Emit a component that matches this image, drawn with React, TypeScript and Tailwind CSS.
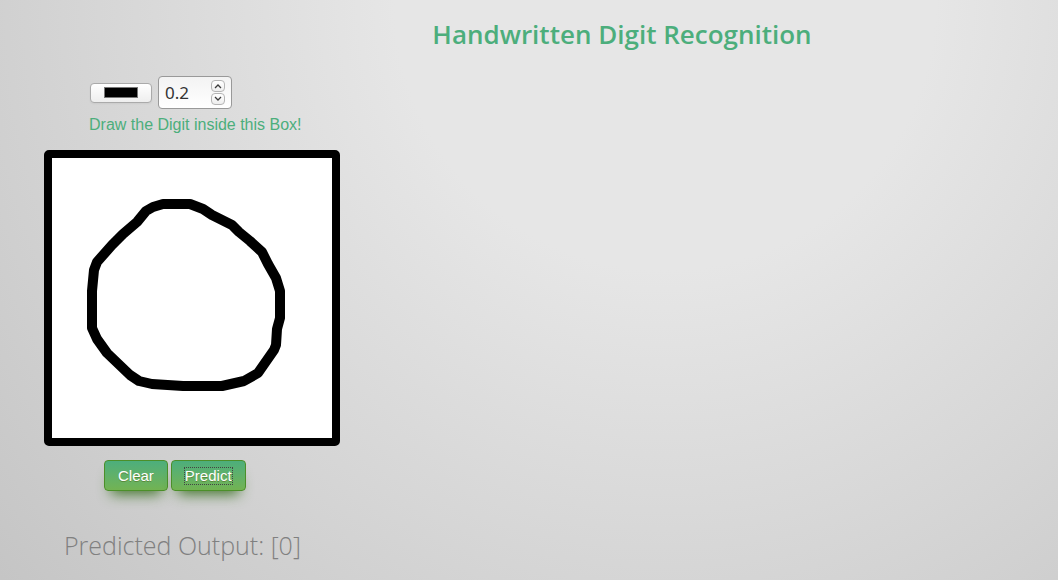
import { useState } from "react";

const stroke =
  "M111 46 L138 46 L151 51 L160 57 L180 67 L187 74 L198 83 L210 94 L216 106 L224 120 L228 133 L228 160 L225 171 L224 187 L222 192 L206 215 L192 223 L170 228 L131 228 L100 226 L87 223 L78 217 L55 195 L45 181 L40 170 L40 133 L42 112 L45 104 L60 87 L71 76 L85 64 L94 53 L101 49 Z";

function Chevron({ d }: { d: string }) {
  return (
    <svg viewBox="0 0 8 6" className="h-1.5 w-2" fill="none" stroke="#3c3c3c" strokeWidth="1.3">
      <path d={d} />
    </svg>
  );
}

const spin =
  "flex h-3 w-3.5 items-center justify-center rounded border border-[#b5b5b5] bg-linear-to-b from-white to-[#eee]";

const action =
  "h-[31px] rounded border border-[#4b8f29] bg-linear-to-b from-[#4cae7c] to-[#72b352] px-[13px] text-[15px] leading-4 text-white shadow-[0_10px_14px_-7px_#3e7327] text-shadow-[0_1px_0_#5b8a3c]";

export default function App() {
  const [color, setColor] = useState("#000000");
  const [size, setSize] = useState(0.2);
  const [path, setPath] = useState(stroke);
  const [result, setResult] = useState("[0]");
  const step = (by: number) => setSize(Math.round((size + by) * 10) / 10);

  return (
    <main className="min-h-screen bg-[radial-gradient(circle_at_665px_0,#e6e6e6_270px,#c5c5c5_880px)] pt-4 font-['Liberation_Sans',Arial,sans-serif]">
      <h1 className="pl-[186px] text-center font-['Open_Sans',sans-serif] text-[26px] leading-9 font-semibold text-[#4cae7c]">
        Handwritten Digit Recognition
      </h1>
      <section className="flex flex-col items-start pt-6 pl-11">
        <div className="flex items-center gap-1.5 pl-[46px]">
          <label className="flex h-5 w-[62px] items-center justify-center rounded border border-[#aaa] bg-linear-to-b from-white to-[#eee] shadow-xs">
            <input
              type="color"
              aria-label="Pen colour"
              value={color}
              onChange={(e) => setColor(e.target.value)}
              className="h-[11px] w-[34px] appearance-none border border-[#777] bg-black p-0 [&::-webkit-color-swatch]:border-0 [&::-webkit-color-swatch-wrapper]:p-0"
            />
          </label>
          <div className="flex h-[33px] w-[74px] items-center justify-between rounded border border-[#999] bg-linear-to-b from-[#f3f3f3] to-white px-1.5">
            <input
              type="number"
              aria-label="Pen size"
              step="0.1"
              value={size}
              onChange={(e) => setSize(Number(e.target.value))}
              className="w-10 bg-transparent font-['Noto_Sans',sans-serif] text-[17px] text-[#333] outline-none [appearance:textfield] [&::-webkit-inner-spin-button]:appearance-none"
            />
            <div className="flex flex-col gap-px">
              <button type="button" aria-label="Increase" onClick={() => step(0.1)} className={spin}>
                <Chevron d="M1 5 L4 2 L7 5" />
              </button>
              <button type="button" aria-label="Decrease" onClick={() => step(-0.1)} className={spin}>
                <Chevron d="M1 1 L4 4 L7 1" />
              </button>
            </div>
          </div>
        </div>
        <p className="pt-1 pl-[45px] text-base leading-6 text-[#4cae7c]">Draw the Digit inside this Box!</p>
        <div className="mt-[13px] rounded-[5px] border-8 border-black bg-white">
          <svg viewBox="0 0 280 280" className="size-[280px]" fill="none" stroke={color} strokeWidth="10" strokeLinejoin="round">
            <path d={path} />
          </svg>
        </div>
        <div className="flex gap-[3px] pt-3.5 pl-[60px]">
          <button type="button" onClick={() => setPath("")} className={action}>
            Clear
          </button>
          <button type="button" onClick={() => setResult("[0]")} className={action}>
            <span className="block outline-1 outline-[#444] outline-dotted">Predict</span>
          </button>
        </div>
        <p className="pt-9 pl-5 font-['Open_Sans',sans-serif] text-[25px] leading-9 font-light text-[#808080]">
          Predicted Output: {result}
        </p>
      </section>
    </main>
  );
}
